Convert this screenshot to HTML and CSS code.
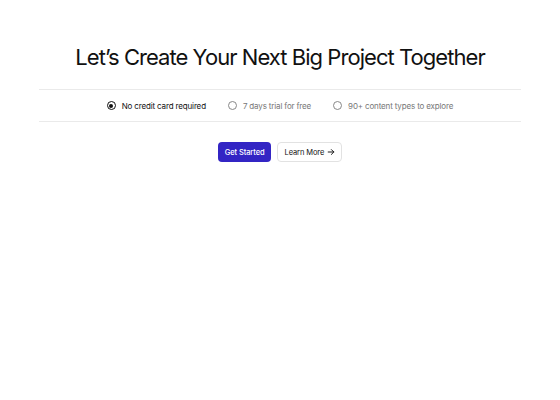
FILE: index.html
```html
<!DOCTYPE html>
<html lang="en">
<head>
    <meta charset="UTF-8">
    <meta name="viewport" content="width=device-width, initial-scale=1.0">
    <title>Let's Create</title>
    <link rel="stylesheet" href="styles.css">
</head>
<body>
    <section class="hero">
        <h1>Let’s Create Your Next Big Project Together</h1>
        <div class="options">
            <label class="option selected"><span class="radio"></span>No credit card required</label>
            <label class="option"><span class="radio"></span>7 days trial for free</label>
            <label class="option"><span class="radio"></span>90+ content types to explore</label>
        </div>
        <div class="actions">
            <button class="btn primary">Get Started</button>
            <button class="btn outline">Learn More
                <svg width="8" height="8" viewBox="0 0 10 10" fill="none" stroke="#111" stroke-width="1.2" stroke-linecap="round" stroke-linejoin="round"><path d="M1.5 5h7M5.5 2l3 3-3 3"/></svg>
            </button>
        </div>
    </section>
</body>
</html>
```

FILE: styles.css
```css
body {
    margin: 0;
    font-family: Inter, "Noto Sans", sans-serif;
    background: white;
    color: #111;
}

.hero {
    padding: 42px 39px 0;
    text-align: center;
}

h1 {
    margin: 0 0 17px;
    font-size: 22px;
    font-weight: 400;
    letter-spacing: -0.95px;
    line-height: 30px;
}

.options {
    display: flex;
    justify-content: center;
    gap: 22px;
    border-top: 1px solid #eaeaea;
    border-bottom: 1px solid #eaeaea;
    height: 31px;
    align-items: center;
    font-size: 8px;
    letter-spacing: -0.15px;
}

.option {
    display: flex;
    align-items: center;
    gap: 6px;
    color: #777;
}

.option.selected {
    color: #111;
}

.radio {
    width: 7px;
    height: 7px;
    border: 1px solid #888;
    border-radius: 50%;
    position: relative;
}

.option.selected .radio {
    border-color: #111;
}

.option.selected .radio::after {
    content: "";
    position: absolute;
    left: 1.5px;
    top: 1.5px;
    width: 4px;
    height: 4px;
    border-radius: 50%;
    background: #111;
}

.actions {
    display: flex;
    justify-content: center;
    gap: 6px;
    margin-top: 20px;
}

.btn {
    font-family: inherit;
    font-size: 7.5px;
    letter-spacing: -0.1px;
    height: 20px;
    padding: 0 7px;
    border-radius: 4px;
    cursor: pointer;
    display: flex;
    align-items: center;
    gap: 3px;
}

.btn.primary {
    background: #3325c4;
    color: white;
    border: none;
    font-weight: 500;
}

.btn.outline {
    background: white;
    color: #111;
    border: 1px solid #e2e2e2;
    padding: 0 6px;
}
```
